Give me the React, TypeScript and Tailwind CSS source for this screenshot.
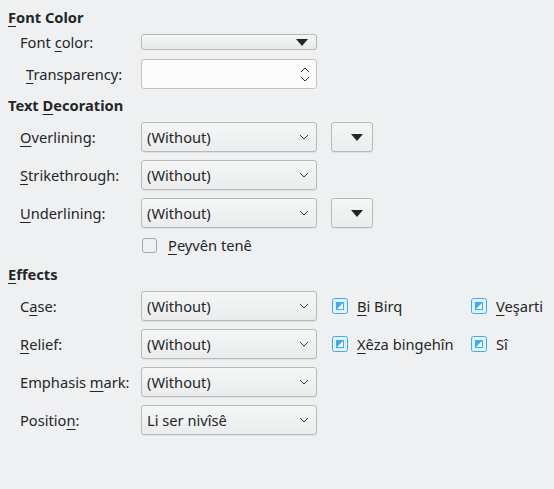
import React from "react";

const font = { fontFamily: '"Noto Sans", "DejaVu Sans", sans-serif' };

function Mn({ text, at }: { text: string; at: number }) {
  // underline the mnemonic letter
  return (
    <>
      {text.slice(0, at)}
      <span className="underline underline-offset-[3px] decoration-1">{text[at]}</span>
      {text.slice(at + 1)}
    </>
  );
}

function Chevron() {
  return (
    <svg width="10" height="6" viewBox="0 0 10 6" className="text-[#31363b]">
      <path d="M1 1l4 4 4-4" fill="none" stroke="currentColor" strokeWidth="1" />
    </svg>
  );
}

function Triangle() {
  return (
    <svg width="12" height="7" viewBox="0 0 12 7">
      <path d="M0 0h12l-6 7z" fill="#232627" />
    </svg>
  );
}

function Select({ value }: { value: string }) {
  return (
    <div className="w-[176px] h-[30px] shrink-0 flex items-center justify-between pl-[5px] pr-[7px] rounded-[3px] border border-[#b7b9ba] bg-gradient-to-b from-[#f5f6f6] to-[#ebeced] shadow-[0_1px_0_rgba(0,0,0,0.06)]">
      <span>{value}</span>
      <Chevron />
    </div>
  );
}

function ColorButton() {
  return (
    <div className="ml-[14px] w-[42px] h-[30px] flex items-center justify-end pr-[9px] rounded-[3px] border border-[#b7b9ba] bg-gradient-to-b from-[#f5f6f6] to-[#ebeced] shadow-[0_1px_0_rgba(0,0,0,0.06)]">
      <Triangle />
    </div>
  );
}

function PartialCheck() {
  return (
    <svg width="16" height="16" viewBox="0 0 16 16" className="shrink-0">
      <rect x="0.5" y="0.5" width="15" height="15" rx="2" fill="#e3f1fa" stroke="#3daee9" />
      <rect x="4" y="4" width="8" height="8" fill="#3daee9" />
      <path d="M11 5v6H5z" fill="#ffffff" />
    </svg>
  );
}

function Label({ children, w = "w-[121px]", pl = "pl-[20px]" }: { children: React.ReactNode; w?: string; pl?: string }) {
  return <div className={`${pl} ${w} shrink-0`}>{children}</div>;
}

function SelectRow({ label, value, extra }: { label: React.ReactNode; value: string; extra?: React.ReactNode }) {
  return (
    <div className="flex items-center h-[30px]">
      <div className="w-[141px] shrink-0 pl-[20px]">{label}</div>
      <Select value={value} />
      {extra}
    </div>
  );
}

function Check({ label }: { label: React.ReactNode }) {
  return (
    <div className="flex items-center gap-[9px]">
      <PartialCheck />
      <span>{label}</span>
    </div>
  );
}

export default function App() {
  return (
    <div
      style={font}
      className="w-[554px] h-[489px] bg-[#eff0f1] text-[#232627] text-[14.67px] leading-[18px] flex flex-col pt-[8px]"
    >
      <div className="pl-[8px] font-bold h-[18px]">
        <Mn text="Font Color" at={0} />
      </div>

      <div className="flex items-center h-[16px] mt-[8px]">
        <Label w="w-[141px]">
          <Mn text="Font color:" at={5} />
        </Label>
        <div className="w-[176px] h-[16px] flex items-center justify-end pr-[8px] rounded-[3px] border border-[#b7b9ba] bg-gradient-to-b from-[#f5f6f6] to-[#e8e9ea]">
          <Triangle />
        </div>
      </div>

      <div className="flex items-center h-[30px] mt-[9px]">
        <Label w="w-[141px]" pl="pl-[26px]">
          <Mn text="Transparency:" at={0} />
        </Label>
        <div className="w-[176px] h-[30px] flex items-center justify-end pr-[6px] rounded-[3px] border border-[#c1c3c4] bg-[#fcfcfc]">
          <div className="flex flex-col gap-[3px]">
            <svg width="10" height="6" viewBox="0 0 10 6">
              <path d="M1 5l4-4 4 4" fill="none" stroke="#31363b" strokeWidth="1" />
            </svg>
            <Chevron />
          </div>
        </div>
      </div>

      <div className="pl-[8px] font-bold h-[18px] mt-[7px]">
        Text <Mn text="Decoration" at={0} />
      </div>

      <div className="flex flex-col gap-[8px] mt-[8px]">
        <SelectRow label={<Mn text="Overlining:" at={0} />} value="(Without)" extra={<ColorButton />} />
        <SelectRow label={<Mn text="Strikethrough:" at={0} />} value="(Without)" />
        <SelectRow label={<Mn text="Underlining:" at={0} />} value="(Without)" extra={<ColorButton />} />
      </div>

      <div className="flex items-center h-[18px] mt-[8px] pl-[142px] gap-[11px]">
        <div className="w-[15px] h-[15px] rounded-[3px] border border-[#a5a7a8]" />
        <span>
          <Mn text="Peyvên tenê" at={0} />
        </span>
      </div>

      <div className="pl-[8px] font-bold h-[18px] mt-[11px]">
        <Mn text="Effects" at={0} />
      </div>

      <div className="flex flex-col gap-[8px] mt-[8px]">
        <SelectRow
          label={<Mn text="Case:" at={1} />}
          value="(Without)"
          extra={
            <div className="flex items-center ml-[15px]">
              <div className="w-[139px]">
                <Check label={<Mn text="Bi Birq" at={0} />} />
              </div>
              <Check label={<Mn text="Veşarti" at={0} />} />
            </div>
          }
        />
        <SelectRow
          label={<Mn text="Relief:" at={0} />}
          value="(Without)"
          extra={
            <div className="flex items-center ml-[15px]">
              <div className="w-[139px]">
                <Check label={<Mn text="Xêza bingehîn" at={0} />} />
              </div>
              <Check label="Sî" />
            </div>
          }
        />
        <SelectRow label={<>Emphasis <Mn text="mark:" at={0} /></>} value="(Without)" />
        <SelectRow label={<Mn text="Position:" at={7} />} value="Li ser nivîsê" />
      </div>
    </div>
  );
}
